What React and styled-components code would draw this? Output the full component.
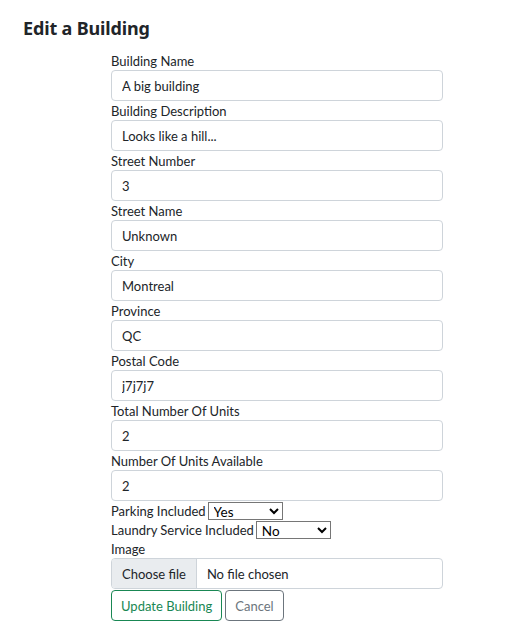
import React from 'react';
import styled, { createGlobalStyle } from 'styled-components';

const GlobalStyle = createGlobalStyle`
  body {
    margin: 0;
    background: #fff;
    color: #212529;
    font-family: Lato, "Noto Sans", sans-serif;
  }
`;

/* ── Page ── */
const Page = styled.div`
  padding: 14px 23px 20px;
`;

const Title = styled.h2`
  margin: 0 0 9px;
  font-family: "Noto Sans", sans-serif;
  font-size: 18px;
  font-weight: 700;
  line-height: 28px;
  letter-spacing: -0.15px;
`;

const Form = styled.form`
  width: 332px;
  margin-left: 88px;
  display: flex;
  flex-direction: column;
  font-size: 13px;
`;

const Label = styled.label`
  display: block;
  box-sizing: border-box;
  height: 19px;
  padding-top: 1px;
  line-height: 19px;
`;

const Input = styled.input`
  box-sizing: border-box;
  width: 100%;
  height: 31px;
  padding: 0 10px;
  border: 1px solid #ced4da;
  border-radius: 4px;
  font: inherit;
  color: #212529;
`;

/* ── Inline select rows ── */
const InlineRow = styled.div`
  display: flex;
  align-items: center;
  height: 19px;
  gap: 2px;
`;

const Select = styled.select`
  width: 75px;
  height: 18px;
  padding: 0 1px;
  border: 1px solid #767676;
  border-radius: 0;
  background: #fff;
  font: inherit;
  font-size: 13.5px;
  color: #000;
`;

/* ── File picker ── */
const FileBox = styled.div`
  box-sizing: border-box;
  display: flex;
  height: 31px;
  border: 1px solid #ced4da;
  border-radius: 4px;
  overflow: hidden;
`;

const FileButton = styled.span`
  display: flex;
  align-items: center;
  padding: 0 10px;
  background: #e9ecef;
  border-right: 1px solid #ced4da;
`;

const FileName = styled.span`
  display: flex;
  align-items: center;
  padding-left: 10px;
`;

/* ── Buttons ── */
const Actions = styled.div`
  display: flex;
  gap: 3px;
  margin-top: 1px;
`;

const Button = styled.button`
  height: 31px;
  padding: 0 9px;
  background: #fff;
  border: 1px solid ${({ color }) => color};
  border-radius: 4px;
  color: ${({ color }) => color};
  font: inherit;
  cursor: pointer;
`;

const fields = [
  ['Building Name', 'A big building'],
  ['Building Description', 'Looks like a hill...'],
  ['Street Number', '3'],
  ['Street Name', 'Unknown'],
  ['City', 'Montreal'],
  ['Province', 'QC'],
  ['Postal Code', 'j7j7j7'],
  ['Total Number Of Units', '2'],
  ['Number Of Units Available', '2'],
];

export default function App() {
  return (
    <>
      <GlobalStyle />
      <Page>
        <Title>Edit a Building</Title>
        <Form onSubmit={(e) => e.preventDefault()}>
          {fields.map(([label, value]) => (
            <div key={label}>
              <Label>{label}</Label>
              <Input defaultValue={value} />
            </div>
          ))}
          <InlineRow>
            <span>Parking Included</span>
            <Select defaultValue="Yes">
              <option>Yes</option>
              <option>No</option>
            </Select>
          </InlineRow>
          <InlineRow>
            <span>Laundry Service Included</span>
            <Select defaultValue="No">
              <option>Yes</option>
              <option>No</option>
            </Select>
          </InlineRow>
          <Label>Image</Label>
          <FileBox>
            <FileButton>Choose file</FileButton>
            <FileName>No file chosen</FileName>
          </FileBox>
          <Actions>
            <Button type="submit" color="#198754">Update Building</Button>
            <Button type="button" color="#6c757d">Cancel</Button>
          </Actions>
        </Form>
      </Page>
    </>
  );
}
